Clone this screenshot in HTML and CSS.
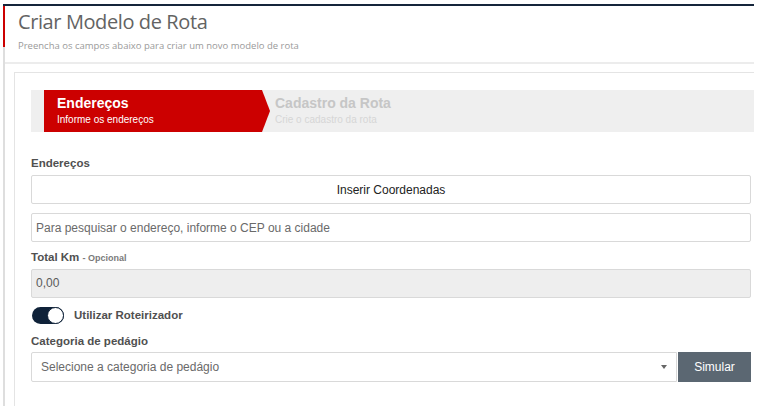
FILE: index.html
```html
<!DOCTYPE html>
<html lang="pt-BR">
<head>
<meta charset="utf-8">
<title>Criar Modelo de Rota</title>
<link rel="stylesheet" href="styles.css">
</head>
<body>
<div class="frame">
  <div class="rail"></div>
  <main class="main">
    <header class="page-head">
      <h1 class="page-title">Criar Modelo de Rota</h1>
      <p class="page-sub">Preencha os campos abaixo para criar um novo modelo de rota</p>
    </header>

    <section class="card">
      <nav class="steps">
        <div class="step step-active">
          <span class="step-title">Endereços</span>
          <span class="step-desc">Informe os endereços</span>
        </div>
        <div class="step step-next">
          <span class="step-title">Cadastro da Rota</span>
          <span class="step-desc">Crie o cadastro da rota</span>
        </div>
      </nav>

      <label class="field-label lbl-first">Endereços</label>
      <button class="btn-block" type="button">Inserir Coordenadas</button>
      <input class="text-input gap-top" type="text" placeholder="Para pesquisar o endereço, informe o CEP ou a cidade">

      <label class="field-label lbl-km">Total Km <small class="optional">- Opcional</small></label>
      <div class="text-input is-disabled">0,00</div>

      <div class="switch-row">
        <span class="switch"><span class="switch-knob"></span></span>
        <span class="switch-label">Utilizar Roteirizador</span>
      </div>

      <label class="field-label lbl-cat">Categoria de pedágio</label>
      <div class="select-row">
        <div class="select">
          <span class="select-placeholder">Selecione a categoria de pedágio</span>
          <span class="select-caret"></span>
        </div>
        <button class="btn-simular" type="button">Simular</button>
      </div>
    </section>
  </main>
</div>
</body>
</html>
```

FILE: styles.css
```css
html, body {
  margin: 0;
  padding: 0;
  background: #fff;
  overflow: hidden;
}

body {
  font-family: "Liberation Sans", Arial, sans-serif;
  color: #333;
}

/* outer app frame: navy top rule, grey left rail with red marker */
.frame {
  margin: 4px 0 0 3px;
  width: 751px;
  height: 402px;
  border-top: 2px solid #15253b;
  display: flex;
  overflow: hidden;
}

.rail {
  flex: none;
  width: 2px;
  background: linear-gradient(#cc0000 0 41px, #dedede 41px);
}

.main {
  flex: none;
  width: 790px;
}

/* page header */
.page-head {
  box-sizing: border-box;
  height: 58px;
  padding: 4px 0 0 13px;
  border-bottom: 2px solid #ececec;
}

.page-title {
  margin: 0;
  font-family: "Open Sans", sans-serif;
  font-weight: 400;
  font-size: 20px;
  line-height: 24px;
  letter-spacing: -0.4px;
  color: #636363;
}

.page-sub {
  margin: 6px 0 0;
  font-family: "Open Sans", sans-serif;
  font-size: 9.5px;
  line-height: 12px;
  color: #9a9a9a;
}

/* form card */
.card {
  width: 720px;
  margin: 8px 0 0 9px;
  padding: 17px 16px;
  border: 1px solid #e4e4e4;
  min-height: 400px;
}

/* wizard steps */
.steps {
  display: flex;
  height: 42px;
  margin-right: -6px;
  padding-left: 13px;
  background: #efefef;
}

.step {
  display: flex;
  flex-direction: column;
}

.step-active {
  width: 213px;
  padding-left: 13px;
  background: #cc0000;
  clip-path: polygon(0 0, calc(100% - 8px) 0, 100% 50%, calc(100% - 8px) 100%, 0 100%);
  color: #fff;
}

.step-next {
  padding-left: 5px;
  color: #c6c6c6;
}

.step-title {
  margin-top: 5px;
  font-weight: 700;
  font-size: 14px;
  line-height: 16px;
}

.step-desc {
  margin-top: 3px;
  font-size: 10px;
  line-height: 12px;
}

.step-next .step-desc {
  color: #d6d6d6;
}

/* labels */
.field-label {
  display: block;
  font-weight: 700;
  font-size: 11.5px;
  line-height: 14px;
  color: #505050;
}

.lbl-first { margin: 24px 0 5px; }
.lbl-km { margin: 8px 0 4px; }
.lbl-cat { margin: 10px 0 4px; }

.optional {
  font-size: 9px;
  font-weight: 700;
  color: #7a7a7a;
}

/* controls */
.btn-block {
  display: block;
  box-sizing: border-box;
  width: 100%;
  height: 29px;
  margin: 0;
  border: 1px solid #d9d9d9;
  border-radius: 2px;
  background: #fff;
  font-family: "Liberation Sans", Arial, sans-serif;
  font-size: 12px;
  color: #222;
}

.text-input {
  display: block;
  box-sizing: border-box;
  width: 100%;
  height: 29px;
  margin: 0;
  padding: 0 4px;
  border: 1px solid #d9d9d9;
  border-radius: 2px;
  background: #fff;
  font-family: "Liberation Sans", Arial, sans-serif;
  font-size: 12px;
  line-height: 27px;
  color: #555;
  outline: none;
}

.text-input::placeholder {
  color: #6a6a6a;
}

.gap-top { margin-top: 9px; }

.is-disabled {
  background: #eeeeee;
  color: #5a5a5a;
}

/* toggle */
.switch-row {
  display: flex;
  align-items: center;
  gap: 10px;
  height: 18px;
  margin-top: 8px;
}

.switch {
  position: relative;
  flex: none;
  width: 32px;
  height: 17px;
  margin-left: 1px;
  border-radius: 9px;
  background: #0f2239;
}

.switch-knob {
  position: absolute;
  top: 0;
  right: 0;
  box-sizing: border-box;
  width: 17px;
  height: 17px;
  border-radius: 50%;
  border: 1px solid #0f2239;
  background: #fff;
}

.switch-label {
  font-weight: 700;
  font-size: 11.5px;
  color: #505050;
}

/* select + action */
.select-row {
  display: flex;
  gap: 1px;
  height: 30px;
}

.select {
  flex: 1;
  display: flex;
  align-items: center;
  justify-content: space-between;
  box-sizing: border-box;
  padding: 0 9px 0 9px;
  border: 1px solid #d9d9d9;
  border-radius: 2px 0 0 2px;
  background: #fff;
}

.select-placeholder {
  font-size: 12px;
  color: #6a6a6a;
}

.select-caret {
  width: 0;
  height: 0;
  border-left: 3px solid transparent;
  border-right: 3px solid transparent;
  border-top: 4px solid #666;
}

.btn-simular {
  flex: none;
  width: 73px;
  margin: 0;
  border: 0;
  background: #5b6772;
  color: #fff;
  font-family: "Liberation Sans", Arial, sans-serif;
  font-size: 12px;
}
```
